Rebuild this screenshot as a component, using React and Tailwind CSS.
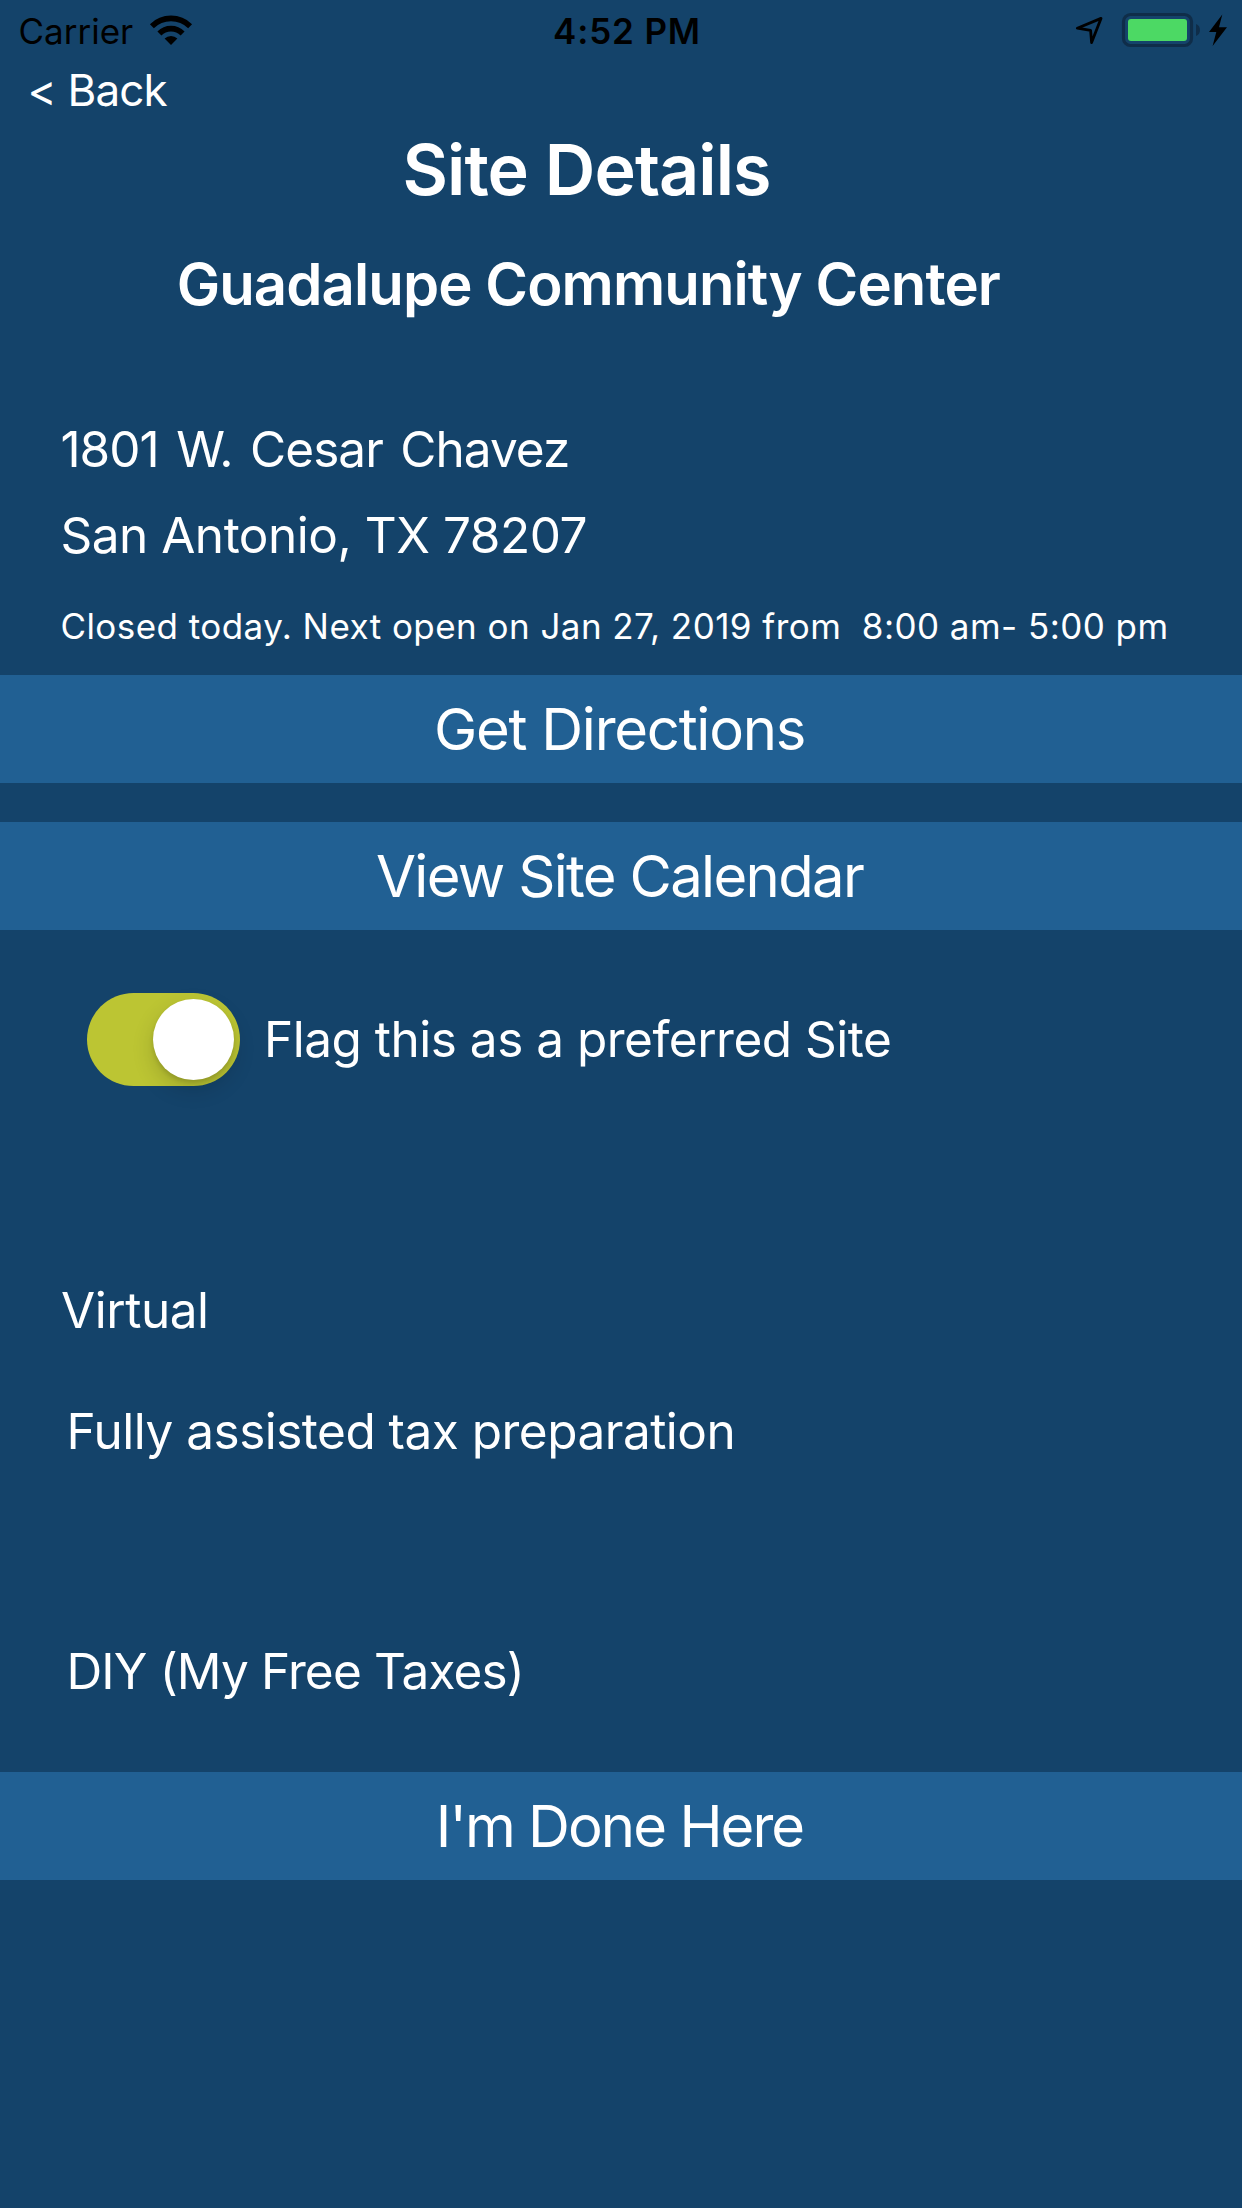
function WifiIcon() {
  return (
    <svg className="mb-[2px] ml-[16px] h-[32px] w-[44px]" viewBox="149 14 44 32" fill="none">
      <path d="M151.9 26.2 A27.3 27.3 0 0 1 190.1 26.2" stroke="#000" strokeWidth="5.6" />
      <path d="M159.4 33.4 A16.4 16.4 0 0 1 182.6 33.4" stroke="#000" strokeWidth="5.6" />
      <path d="M171 45 L164.6 38.6 A9.1 9.1 0 0 1 177.4 38.6 Z" fill="#000" />
    </svg>
  )
}

function StatusIcons() {
  return (
    <svg className="mt-[2px] mr-[12px] ml-auto h-[40px] w-[158px]" viewBox="1072 11 158 40" fill="none">
      <path
        d="M1077.3 28.2 L1101 18.4 L1091.6 42.6 L1090.6 30.4 Z"
        stroke="#000"
        strokeWidth="2.8"
        strokeLinejoin="round"
      />
      <rect x="1123.5" y="14.5" width="68" height="31" rx="7" stroke="#0f2d49" strokeWidth="3.2" />
      <rect x="1128" y="19" width="59" height="22" rx="3" fill="#4cd964" />
      <path d="M1196 24 C1201.3 25.5 1201.3 34.5 1196 36 Z" fill="#0f2d49" />
      <path d="M1222.3 14.5 L1209 32 H1216.3 L1212.6 46 L1227 27.3 H1219 Z" fill="#000" />
    </svg>
  )
}

function BarButton({ children, className }) {
  return (
    <button className={`block h-[108px] w-full bg-[#216093] pr-[3px] text-center text-[58px] leading-[108px] ${className}`}>
      {children}
    </button>
  )
}

export default function App() {
  return (
    <div className="h-[2208px] w-[1242px] overflow-hidden bg-[#14436a] font-['Inter','Liberation_Sans',sans-serif] whitespace-pre text-white">
      <header className="flex h-[60px] items-center text-[35px] leading-[62px] text-black">
        <div className="flex w-[553px] items-center pt-[2px] pl-[18.5px]">
          <span>Carrier</span>
          <WifiIcon />
        </div>
        <span className="pt-[2px] font-[570] tracking-[0.86px]">4:52 PM</span>
        <StatusIcons />
      </header>

      <nav className="mt-[2px] flex pl-[27.5px] text-[44px] leading-[56px]">
        <span className="tracking-[-0.8px]">&lt; Back</span>
      </nav>

      <h1 className="pl-[402.5px] text-[70px] leading-[103px] font-semibold tracking-[-0.92px]">Site Details</h1>
      <h2 className="pl-[176.7px] text-[58px] leading-[126px] font-semibold tracking-[-0.89px]">
        Guadalupe Community Center
      </h2>

      <section className="pt-[60px] pl-[60.4px] text-[49.5px]">
        <p className="leading-[84px] tracking-[-0.95px] [word-spacing:4.5px]">1801 W. Cesar Chavez</p>
        <p className="leading-[88px] tracking-[-0.48px]">San Antonio, TX 78207</p>
        <p className="pb-px text-[35px] leading-[95px] tracking-[0.45px]">
          {'Closed today. Next open on Jan 27, 2019 from  8:00 am- 5:00 pm'}
        </p>
      </section>

      <div className="flex flex-col gap-[39px]">
        <BarButton className="tracking-[-1.27px]">Get Directions</BarButton>
        <BarButton className="tracking-[-1.68px]">View Site Calendar</BarButton>
      </div>

      <div className="mt-[63px] flex h-[93px] items-center pl-[87px] text-[49.5px]">
        <div className="flex h-[93px] w-[153px] justify-end rounded-full bg-[#bcc533] p-[6px]">
          <div className="size-[81px] rounded-full bg-white shadow-[0_9px_22px_rgba(0,0,0,0.16),0_3px_4px_rgba(0,0,0,0.12)]" />
        </div>
        <span className="mb-[1px] ml-[24px] leading-[92px] tracking-[-0.494px]">Flag this as a preferred Site</span>
      </div>

      <section className="mt-[194px] pb-[71px] pl-[61px] text-[49.5px] leading-[60px]">
        <p className="tracking-[-0.45px]">Virtual</p>
        <p className="mt-[61px] pl-[5.5px] tracking-[-0.51px]">Fully assisted tax preparation</p>
        <p className="mt-[180px] pl-[5.5px] tracking-[-0.85px]">DIY (My Free Taxes)</p>
      </section>

      <BarButton className="tracking-[-1.95px]">I'm Done Here</BarButton>
    </div>
  )
}
